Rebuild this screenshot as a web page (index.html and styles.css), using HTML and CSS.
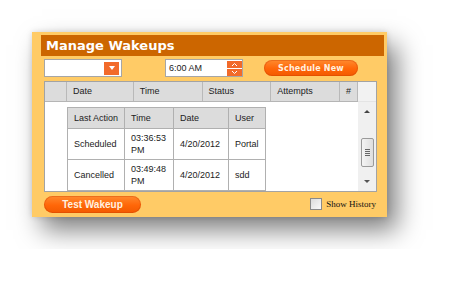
FILE: index.html
```html
<!DOCTYPE html>
<html lang="en">
<head>
    <meta charset="UTF-8">
    <title>Manage Wakeups</title>
    <link rel="stylesheet" href="styles.css">
</head>
<body>
    <section class="wakeups">
        <h1 class="title">Manage Wakeups</h1>

        <div class="content">
            <div class="toolbar">
                <div class="select">
                    <span class="select-btn"><i class="tri-down"></i></span>
                </div>
                <div class="time">
                    <span class="time-text">6:00 AM</span>
                    <span class="spinner">
                        <svg width="15" height="15" viewBox="0 0 15 15">
                            <rect x="0" y="0" width="15" height="7" fill="#f26a2a"/>
                            <rect x="0" y="8" width="15" height="7" fill="#f26a2a"/>
                            <path d="M5 5 L7.5 2.5 L10 5" fill="none" stroke="#fff" stroke-width="1"/>
                            <path d="M5 10 L7.5 12.5 L10 10" fill="none" stroke="#fff" stroke-width="1"/>
                        </svg>
                    </span>
                </div>
                <button class="pill schedule">Schedule New</button>
            </div>

            <div class="grid">
                <div class="grid-main">
                    <div class="grid-head">
                        <span class="col c0"></span>
                        <span class="col c1">Date</span>
                        <span class="col c2">Time</span>
                        <span class="col c3">Status</span>
                        <span class="col c4">Attempts</span>
                        <span class="col c5">#</span>
                    </div>
                    <div class="grid-body">
                        <table class="history">
                            <tr>
                                <th class="h1">Last Action</th>
                                <th class="h2">Time</th>
                                <th class="h3">Date</th>
                                <th class="h4">User</th>
                            </tr>
                            <tr>
                                <td>Scheduled</td>
                                <td>03:36:53 PM</td>
                                <td>4/20/2012</td>
                                <td>Portal</td>
                            </tr>
                            <tr>
                                <td>Cancelled</td>
                                <td>03:49:48 PM</td>
                                <td>4/20/2012</td>
                                <td>sdd</td>
                            </tr>
                        </table>
                    </div>
                </div>
                <div class="scrollbar">
                    <div class="sb-head"></div>
                    <div class="sb-up"><i class="tri-up"></i></div>
                    <div class="sb-gap"></div>
                    <div class="sb-thumb"><i></i><i></i><i></i><i></i></div>
                    <div class="sb-gap2"></div>
                    <div class="sb-down"><i class="tri-dn"></i></div>
                </div>
            </div>

            <div class="footer">
                <button class="pill test">Test Wakeup</button>
                <label class="history-toggle">
                    <span class="check"></span>
                    Show History
                </label>
            </div>
        </div>
    </section>
</body>
</html>
```

FILE: styles.css
```css
body {
    margin: 0;
    padding: 32px;
    background: #fff;
    font-family: 'Liberation Sans', Arial, sans-serif;
}

.wakeups {
    width: 355px;
    height: 185px;
    box-sizing: border-box;
    padding: 3px 3px 0 9px;
    background: #ffcb66;
    box-shadow: 10px 13px 24px rgba(0, 0, 0, 0.5), 0 0 6px rgba(0, 0, 0, 0.15);
}

.title {
    margin: 0;
    height: 21px;
    padding-left: 5px;
    background: #cc6600;
    color: #fff;
    font: bold 13px/21px 'DejaVu Sans', Verdana, sans-serif;
}

.content {
    padding: 0 7px 0 3px;
}

.toolbar {
    display: flex;
    align-items: center;
    margin-top: 3px;
    height: 18px;
}

.select,
.time {
    box-sizing: border-box;
    width: 78px;
    height: 18px;
    background: #fff;
    border: 1px solid #a6a6a6;
    display: flex;
    align-items: center;
}

.select {
    justify-content: flex-end;
    padding-right: 2px;
}

.select-btn {
    width: 15px;
    height: 13px;
    background: #f26a2a;
    display: flex;
    justify-content: center;
    align-items: center;
}

.tri-down {
    border-left: 3px solid transparent;
    border-right: 3px solid transparent;
    border-top: 4px solid #fff;
}

.time {
    margin-left: 43px;
    justify-content: space-between;
    padding: 0 0 0 3px;
    font-size: 9px;
    color: #222;
}

.spinner {
    display: flex;
    height: 15px;
}

.pill {
    border: 0;
    border-radius: 9px;
    color: #fff2e0;
    font-weight: bold;
    padding: 0;
    background: linear-gradient(#ff8a2e, #ff6608 55%, #f25a00);
    box-shadow: inset 0 0 0 1px rgba(200, 60, 0, 0.35);
}

.schedule {
    margin-left: 21px;
    width: 94px;
    height: 16px;
    font: bold 8px 'DejaVu Sans', Verdana, sans-serif;
    letter-spacing: 0.2px;
}

.grid {
    display: flex;
    margin-top: 4px;
    height: 111px;
    box-sizing: border-box;
    border: 1px solid #a3a3a3;
    background: #fff;
    font-size: 9px;
    color: #222;
}

.grid-main {
    width: 314px;
    overflow: hidden;
}

.grid-head {
    display: flex;
    height: 19px;
    background: #dcdcdc;
    border-bottom: 1px solid #b5b5b5;
}

.col {
    box-sizing: border-box;
    border-right: 1px solid #b9b9b9;
    padding-left: 6px;
    line-height: 19px;
}

.c0 { width: 22px; }
.c1 { width: 67px; }
.c2 { width: 69px; }
.c3 { width: 69px; }
.c4 { width: 69px; }
.c5 { width: 18px; padding-left: 6px; }

.grid-body {
    padding: 5px 0 0 22px;
}

.history {
    border-collapse: collapse;
    border: 1px solid #a8a8a8;
    line-height: 12px;
}

.history th,
.history td {
    border: 1px solid #b0b0b0;
    padding: 3px 6px;
    text-align: left;
    font-weight: normal;
}

.history th {
    background: #dcdcdc;
    padding: 4px 6px;
    white-space: nowrap;
}

.h1 { width: 44px; }
.h2 { width: 36px; }
.h3 { width: 42px; }
.h4 { width: 22px; }

.scrollbar {
    width: 18px;
    display: flex;
    flex-direction: column;
    background: #f0f0f0;
}

.sb-head {
    height: 19px;
    border-bottom: 1px solid #e4e4e4;
    background: #f2f2f2;
}

.sb-up,
.sb-down {
    display: flex;
    justify-content: center;
    align-items: center;
}

.sb-up { height: 20px; }
.sb-down { height: 19px; }
.sb-gap { height: 17px; }
.sb-gap2 { height: 5px; }

.tri-up {
    border-left: 3px solid transparent;
    border-right: 3px solid transparent;
    border-bottom: 3px solid #444;
}

.tri-dn {
    border-left: 3px solid transparent;
    border-right: 3px solid transparent;
    border-top: 3px solid #555;
}

.sb-thumb {
    margin: 0 2px 0 3px;
    height: 29px;
    box-sizing: border-box;
    border: 1px solid #9a9a9a;
    border-radius: 2px;
    background: linear-gradient(90deg, #f4f4f4, #dedede);
    display: flex;
    flex-direction: column;
    justify-content: center;
    align-items: center;
    gap: 1px;
}

.sb-thumb i {
    width: 5px;
    height: 1px;
    background: #666;
}

.footer {
    display: flex;
    justify-content: space-between;
    align-items: flex-start;
    margin-top: 4px;
}

.test {
    width: 97px;
    height: 17px;
    font: bold 10px 'Liberation Sans', Arial, sans-serif;
}

.history-toggle {
    display: flex;
    align-items: center;
    gap: 4px;
    margin-top: 2px;
    font: 9px 'Liberation Serif', 'Times New Roman', serif;
    color: #111;
    padding-right: 1px;
}

.check {
    width: 12px;
    height: 12px;
    box-sizing: border-box;
    border: 1px solid #8a8a8a;
    background: linear-gradient(135deg, #dcdcdc, #fafafa);
}
```
